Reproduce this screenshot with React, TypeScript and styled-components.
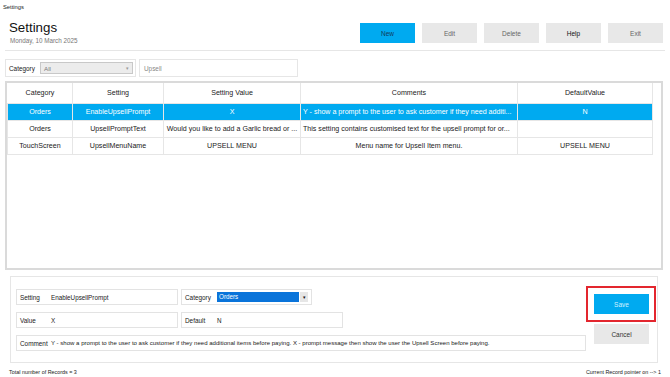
import React from "react"
import styled, { createGlobalStyle } from "styled-components"

const GlobalStyle = createGlobalStyle`
  *, *::before, *::after {
    box-sizing: border-box;
  }
  html, body {
    margin: 0;
    padding: 0;
    background: #fff;
    font-family: "Liberation Sans", Arial, sans-serif;
    color: #222;
  }
`

type Row = {
  category: string
  setting: string
  value: string
  comment: string
  commentAlign: "left" | "center"
  defaultValue: string
  selected?: boolean
}

const rows: Row[] = [
  {
    category: "Orders",
    setting: "EnableUpsellPrompt",
    value: "X",
    comment: "Y - show a prompt to the user to ask customer if they need additi...",
    commentAlign: "left",
    defaultValue: "N",
    selected: true,
  },
  {
    category: "Orders",
    setting: "UpsellPromptText",
    value: "Would you like to add a Garlic bread or ...",
    comment: "This setting contains customised text for the upsell prompt for or...",
    commentAlign: "left",
    defaultValue: "",
  },
  {
    category: "TouchScreen",
    setting: "UpsellMenuName",
    value: "UPSELL MENU",
    comment: "Menu name for Upsell Item menu.",
    commentAlign: "center",
    defaultValue: "UPSELL MENU",
  },
]

const columns = [
  { title: "Category", width: 65 },
  { title: "Setting", width: 91 },
  { title: "Setting Value", width: 137 },
  { title: "Comments", width: 217 },
  { title: "DefaultValue", width: 135 },
]

export default function App() {
  return (
    <>
      <GlobalStyle />
      <S.Window>
        <S.TitleBar>Settings</S.TitleBar>
        <S.Header>
          <S.TitleBlock>
            <S.Title>Settings</S.Title>
            <S.Date>Monday, 10 March 2025</S.Date>
          </S.TitleBlock>
          <S.Toolbar>
            <S.ToolButton $primary>New</S.ToolButton>
            <S.ToolButton>Edit</S.ToolButton>
            <S.ToolButton>Delete</S.ToolButton>
            <S.ToolButton $active>Help</S.ToolButton>
            <S.ToolButton>Exit</S.ToolButton>
          </S.Toolbar>
        </S.Header>

        <S.FilterRow>
          <S.FilterBox>
            <S.FilterLabel>Category</S.FilterLabel>
            <S.Combo>
              <S.ComboText>All</S.ComboText>
              <S.ComboArrow>▾</S.ComboArrow>
            </S.Combo>
          </S.FilterBox>
          <S.Search>Upsell</S.Search>
        </S.FilterRow>

        <S.GridBox>
          <S.Table>
            <colgroup>
              {columns.map((c) => (
                <col key={c.title} style={{ width: c.width }} />
              ))}
            </colgroup>
            <thead>
              <tr>
                {columns.map((c) => (
                  <S.HeadCell key={c.title}>{c.title}</S.HeadCell>
                ))}
              </tr>
            </thead>
            <tbody>
              {rows.map((r) => (
                <S.BodyRow key={r.setting} $selected={r.selected}>
                  <S.Cell>{r.category}</S.Cell>
                  <S.Cell>{r.setting}</S.Cell>
                  <S.Cell>{r.value}</S.Cell>
                  <S.Cell $align={r.commentAlign}>{r.comment}</S.Cell>
                  <S.Cell>{r.defaultValue}</S.Cell>
                </S.BodyRow>
              ))}
            </tbody>
          </S.Table>
        </S.GridBox>

        <S.Panel>
          <S.Fields>
            <S.FieldRow>
              <S.Field $width={162}>
                <S.FieldLabel>Setting</S.FieldLabel>
                <S.FieldValue>EnableUpsellPrompt</S.FieldValue>
              </S.Field>
              <S.Field $width={131}>
                <S.FieldLabel $wide>Category</S.FieldLabel>
                <S.PanelCombo>
                  <S.PanelComboText>Orders</S.PanelComboText>
                  <S.PanelComboArrow>▾</S.PanelComboArrow>
                </S.PanelCombo>
              </S.Field>
            </S.FieldRow>
            <S.FieldRow>
              <S.Field $width={162}>
                <S.FieldLabel>Value</S.FieldLabel>
                <S.FieldValue>X</S.FieldValue>
              </S.Field>
              <S.Field $width={162}>
                <S.FieldLabel $wide>Default</S.FieldLabel>
                <S.FieldValue>N</S.FieldValue>
              </S.Field>
            </S.FieldRow>
            <S.FieldRow>
              <S.Field $width={570}>
                <S.FieldLabel>Comment</S.FieldLabel>
                <S.FieldValue $small>
                  Y - show a prompt to the user to ask customer if they need additional items before paying. X -
                  prompt message then show the user the Upsell Screen before paying.
                </S.FieldValue>
              </S.Field>
            </S.FieldRow>
          </S.Fields>
          <S.Actions>
            <S.Highlight>
              <S.ActionButton $primary>Save</S.ActionButton>
            </S.Highlight>
            <S.ActionButton>Cancel</S.ActionButton>
          </S.Actions>
        </S.Panel>

        <S.Footer>
          <span>Total number of Records = 3</span>
          <span>Current Record pointer on --&gt; 1</span>
        </S.Footer>
      </S.Window>
    </>
  )
}

var S = {
  Window: styled.div`
    width: 670px;
    height: 377px;
    display: flex;
    flex-direction: column;
    overflow: hidden;
  `,
  TitleBar: styled.div`
    height: 14px;
    line-height: 14px;
    padding-left: 3px;
    font-size: 5.8px;
    color: #222;
  `,
  Header: styled.div`
    height: 37px;
    margin: 0 5px;
    padding: 0 2px 0 4px;
    border-bottom: 1px solid #e6e6e6;
    display: flex;
    justify-content: space-between;
    align-items: flex-start;
  `,
  TitleBlock: styled.div`
    padding-top: 6px;
    display: flex;
    flex-direction: column;
  `,
  Title: styled.div`
    font-size: 13.3px;
    line-height: 16px;
    color: #111;
  `,
  Date: styled.div`
    font-size: 6.3px;
    line-height: 9px;
    color: #777;
    padding-left: 1px;
  `,
  Toolbar: styled.div`
    display: flex;
    gap: 7px;
    padding-top: 9px;
  `,
  ToolButton: styled.div<{ $primary?: boolean; $active?: boolean }>`
    width: 55px;
    height: 20px;
    display: flex;
    align-items: center;
    justify-content: center;
    font-size: 6.5px;
    background: ${({ $primary }) => ($primary ? "#00aaf0" : "#e8e8e8")};
    color: ${({ $primary, $active }) => ($primary ? "#123a5c" : $active ? "#111" : "#666")};
  `,
  FilterRow: styled.div`
    margin: 8px 5px 0;
    height: 18px;
    display: flex;
    gap: 3px;
  `,
  FilterBox: styled.div`
    width: 131px;
    border: 1px solid #e6e6e6;
    display: flex;
    align-items: center;
    padding-left: 3px;
  `,
  FilterLabel: styled.span`
    width: 31px;
    font-size: 6.4px;
    color: #222;
  `,
  Combo: styled.div`
    width: 93px;
    height: 12px;
    border: 1px solid #c8c8c8;
    background: #ececec;
    display: flex;
    align-items: center;
  `,
  ComboText: styled.span`
    flex: 1;
    padding-left: 3px;
    font-size: 6.2px;
    color: #777;
  `,
  ComboArrow: styled.span`
    width: 9px;
    font-size: 5px;
    color: #999;
    text-align: center;
  `,
  Search: styled.div`
    width: 159px;
    border: 1px solid #e6e6e6;
    display: flex;
    align-items: center;
    padding-left: 4px;
    font-size: 6.4px;
    color: #888;
  `,
  GridBox: styled.div`
    margin: 4px 7px 0 5px;
    height: 189px;
    border: 2px solid #dadada;
    background: #fff;
  `,
  Table: styled.table`
    width: 645px;
    table-layout: fixed;
    border-collapse: collapse;
    border-right: 1px solid #e6e6e6;
  `,
  HeadCell: styled.th`
    height: 20px;
    padding: 0;
    font-weight: 400;
    font-size: 7.1px;
    color: #222;
    text-align: center;
    border: 1px solid #e6e6e6;
    border-top: none;
    border-left-color: #fff;
  `,
  BodyRow: styled.tr<{ $selected?: boolean }>`
    height: 17px;
    background: ${({ $selected }) => ($selected ? "#00aaf0" : "#fff")};
    color: ${({ $selected }) => ($selected ? "#fff" : "#222")};
  `,
  Cell: styled.td<{ $align?: "left" | "center" }>`
    padding: 0 2px;
    font-size: 7.1px;
    text-align: ${({ $align }) => $align || "center"};
    white-space: nowrap;
    overflow: hidden;
    border: 1px solid #e6e6e6;
  `,
  Panel: styled.div`
    margin: 6px 12px 0 10px;
    height: 87px;
    border: 1px solid #e6e6e6;
    display: flex;
    align-items: flex-start;
  `,
  Fields: styled.div`
    margin: 12px 0 0 5px;
    display: flex;
    flex-direction: column;
    gap: 7px;
  `,
  FieldRow: styled.div`
    display: flex;
    gap: 3px;
  `,
  Field: styled.div<{ $width: number }>`
    width: ${({ $width }) => $width}px;
    height: 16px;
    border: 1px solid #e3e3e3;
    display: flex;
    align-items: center;
    padding-left: 3px;
    white-space: nowrap;
    overflow: hidden;
  `,
  FieldLabel: styled.span<{ $wide?: boolean }>`
    width: ${({ $wide }) => ($wide ? 32 : 31)}px;
    flex-shrink: 0;
    font-size: 6.4px;
    color: #222;
  `,
  FieldValue: styled.span<{ $small?: boolean }>`
    font-size: ${({ $small }) => ($small ? 6.05 : 6.3)}px;
    color: #222;
  `,
  PanelCombo: styled.div`
    display: flex;
    align-items: stretch;
    height: 10px;
    gap: 1px;
  `,
  PanelComboText: styled.span`
    width: 82px;
    background: #0a74da;
    color: #fff;
    font-size: 6.3px;
    line-height: 10px;
    padding-left: 2px;
  `,
  PanelComboArrow: styled.span`
    width: 8px;
    background: #e6e6e6;
    color: #111;
    font-size: 5px;
    line-height: 10px;
    text-align: center;
  `,
  Actions: styled.div`
    margin: 9px 0 0 0;
    display: flex;
    flex-direction: column;
    align-items: flex-start;
    gap: 2px;
  `,
  Highlight: styled.div`
    border: 2px solid #e3262e;
    padding: 6px 5px 6px 6px;
  `,
  ActionButton: styled.div<{ $primary?: boolean }>`
    width: 55px;
    height: 20px;
    margin-left: ${({ $primary }) => ($primary ? 0 : 8)}px;
    display: flex;
    align-items: center;
    justify-content: center;
    font-size: 6.5px;
    background: ${({ $primary }) => ($primary ? "#00aaf0" : "#e8e8e8")};
    color: ${({ $primary }) => ($primary ? "#d4f1ff" : "#333")};
  `,
  Footer: styled.div`
    flex: 1;
    display: flex;
    justify-content: space-between;
    align-items: center;
    padding: 4px 9px 0;
    font-size: 5.4px;
    color: #222;
  `,
}
